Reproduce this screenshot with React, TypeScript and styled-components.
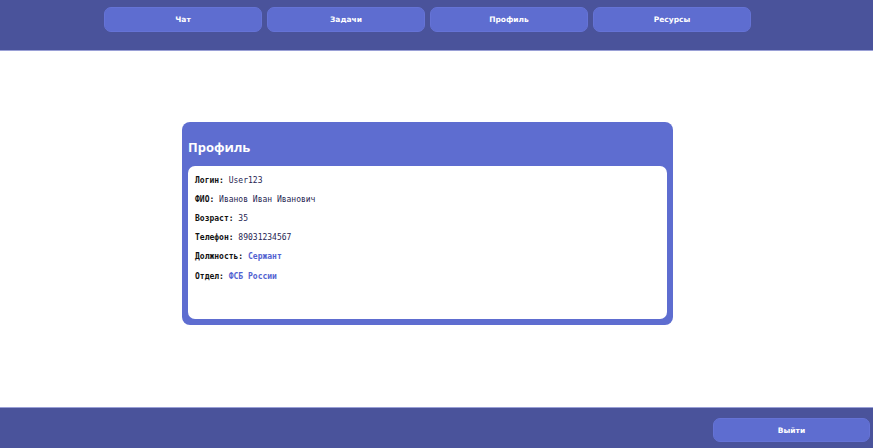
import React from "react";
import styled, { createGlobalStyle } from "styled-components";

const Global = createGlobalStyle`
  html, body { margin: 0; padding: 0; background: #ffffff; }
  body { font-family: "DejaVu Sans Mono", monospace; }
  #root { min-height: 100vh; display: flex; flex-direction: column; }
`;

const Page = styled.div`
  min-height: 100vh;
  display: flex;
  flex-direction: column;
`;

const Header = styled.header`
  height: 50px;
  background: #4a539b;
  border-bottom: 1px solid #9aa0d6;
  display: flex;
  justify-content: center;
  padding-right: 18px;
`;

const Nav = styled.nav`
  display: grid;
  grid-template-columns: repeat(4, 158px);
  gap: 5px;
  padding-top: 7px;
  align-items: start;
`;

const NavButton = styled.button`
  height: 25px;
  border: 1px solid #6573d6;
  border-radius: 7px;
  background: #5e6dd0;
  color: #ffffff;
  font-family: "DejaVu Sans", sans-serif;
  font-weight: 700;
  font-size: 7.5px;
  cursor: pointer;
  padding: 0;
`;

const Main = styled.main`
  flex: 1;
  display: flex;
  align-items: center;
  justify-content: center;
  padding: 0 18px 12px 0;
`;

const Card = styled.section`
  width: 491px;
  box-sizing: border-box;
  padding: 0 6px 6px;
  background: #5e6dd0;
  border-radius: 8px;
`;

const Title = styled.h2`
  margin: 0;
  padding: 16px 0 10px;
  line-height: 18px;
  font-family: "Open Sans", sans-serif;
  font-weight: 700;
  font-size: 13px;
  color: #ffffff;
`;

const InfoBox = styled.div`
  background: #ffffff;
  border-radius: 7px;
  height: 153px;
  box-sizing: border-box;
  padding: 5px 7px;
`;

const Row = styled.div`
  line-height: 19.2px;
  font-size: 8px;
  color: #1f2552;
`;

const Label = styled.span`
  font-weight: 700;
  color: #111111;
`;

const Value = styled.span<{ $accent?: boolean }>`
  color: ${(p) => (p.$accent ? "#5262d1" : "#1f2552")};
  font-weight: ${(p) => (p.$accent ? 700 : 400)};
`;

const Footer = styled.footer`
  height: 41px;
  box-sizing: border-box;
  background: #4a539b;
  border-top: 1px solid #9aa0d6;
  display: flex;
  justify-content: flex-end;
  align-items: flex-start;
  padding: 10px 3px 0 0;
`;

const LogoutButton = styled(NavButton)`
  width: 157px;
  height: 24px;
`;

const rows: { label: string; value: string; accent?: boolean }[] = [
  { label: "Логин:", value: "User123" },
  { label: "ФИО:", value: "Иванов Иван Иванович" },
  { label: "Возраст:", value: "35" },
  { label: "Телефон:", value: "89031234567" },
  { label: "Должность:", value: "Сержант", accent: true },
  { label: "Отдел:", value: "ФСБ России", accent: true },
];

export default function App() {
  return (
    <Page>
      <Global />
      <Header>
        <Nav>
          <NavButton>Чат</NavButton>
          <NavButton>Задачи</NavButton>
          <NavButton>Профиль</NavButton>
          <NavButton>Ресурсы</NavButton>
        </Nav>
      </Header>
      <Main>
        <Card>
          <Title>Профиль</Title>
          <InfoBox>
            {rows.map((r) => (
              <Row key={r.label}>
                <Label>{r.label}</Label> <Value $accent={r.accent}>{r.value}</Value>
              </Row>
            ))}
          </InfoBox>
        </Card>
      </Main>
      <Footer>
        <LogoutButton>Выйти</LogoutButton>
      </Footer>
    </Page>
  );
}
